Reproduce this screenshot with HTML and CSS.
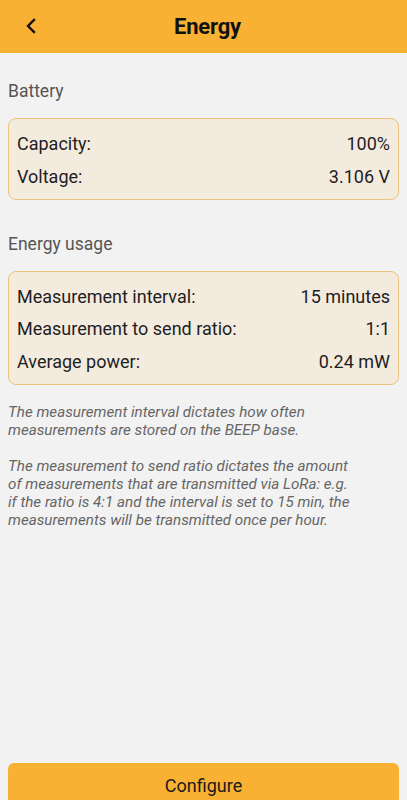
FILE: index.html
```html
<!DOCTYPE html>
<html lang="en">
<head>
<meta charset="utf-8">
<title>Energy</title>
<link rel="stylesheet" href="styles.css">
</head>
<body>
<div class="app">
  <header class="topbar">
    <button class="back" aria-label="Back">
      <svg width="14" height="16" viewBox="0 0 14 16"><path d="M10 2 L4 8 L10 14" fill="none" stroke="#111" stroke-width="2.4" stroke-linecap="square"/></svg>
    </button>
    <h1 class="title">Energy</h1>
  </header>
  <main class="content">
    <h2 class="section-label">Battery</h2>
    <div class="card">
      <div class="row"><span>Capacity:</span><span>100%</span></div>
      <div class="row"><span>Voltage:</span><span>3.106 V</span></div>
    </div>
    <h2 class="section-label second">Energy usage</h2>
    <div class="card">
      <div class="row"><span>Measurement interval:</span><span>15 minutes</span></div>
      <div class="row"><span>Measurement to send ratio:</span><span>1:1</span></div>
      <div class="row"><span>Average power:</span><span>0.24 mW</span></div>
    </div>
    <p class="note">The measurement interval dictates how often measurements are stored on the BEEP base.</p>
    <p class="note">The measurement to send ratio dictates the amount of measurements that are transmitted via LoRa: e.g. if the ratio is 4:1 and the interval is set to 15 min, the measurements will be transmitted once per hour.</p>
  </main>
  <div class="footer">
    <button class="configure">Configure</button>
  </div>
</div>
</body>
</html>
```
FILE: styles.css
```css
* { box-sizing: border-box; }
html, body { margin: 0; padding: 0; }
body {
  background: #f2f2f2;
  font-family: Roboto, "Noto Sans", sans-serif;
  color: #1a1a1a;
}
.app {
  height: 800px;
  display: flex;
  flex-direction: column;
  overflow: hidden;
}
.topbar {
  height: 53px;
  background: #f8b133;
  display: flex;
  align-items: center;
  justify-content: center;
  padding-left: 8px;
  position: relative;
  flex-shrink: 0;
}
.back {
  position: absolute;
  left: 21px;
  top: 17px;
  background: none;
  border: 0;
  padding: 0;
  width: 20px;
  height: 18px;
  display: flex;
  align-items: center;
  justify-content: center;
}
.title {
  margin: 0;
  font-size: 22px;
  font-weight: 700;
  color: #111;
  letter-spacing: -0.2px;
}
.content {
  flex: 1;
  padding: 0 8px;
}
.section-label {
  margin: 0;
  font-size: 17.5px;
  font-weight: 400;
  color: #555;
  padding-top: 26px;
  height: 65px;
  line-height: 24px;
}
.section-label.second {
  padding-top: 32px;
  height: 71px;
}
.card {
  background: #f4ebdf;
  border: 1px solid #ebc27b;
  border-radius: 8px;
  padding: 8px 8px 6px 8px;
}
.row {
  display: flex;
  justify-content: space-between;
  font-size: 18px;
  line-height: 33px;
  color: #1e1e1e;
}
.row + .row { margin-top: -0.5px; }
.note {
  margin: 18px 0 0 0;
  font-size: 15.2px;
  line-height: 18px;
  font-style: italic;
  color: #666;
  max-width: 346px;
}
.note + .note { margin-top: 18px; }
.footer {
  padding: 0 8px;
  flex-shrink: 0;
  margin-bottom: -10px;
}
.configure {
  width: 100%;
  height: 47px;
  background: #f8b133;
  border: 0;
  border-radius: 6px;
  font-family: Roboto, "Noto Sans", sans-serif;
  font-size: 18px;
  color: #1a1a1a;
  padding: 0 0 2px 0;
}
```
